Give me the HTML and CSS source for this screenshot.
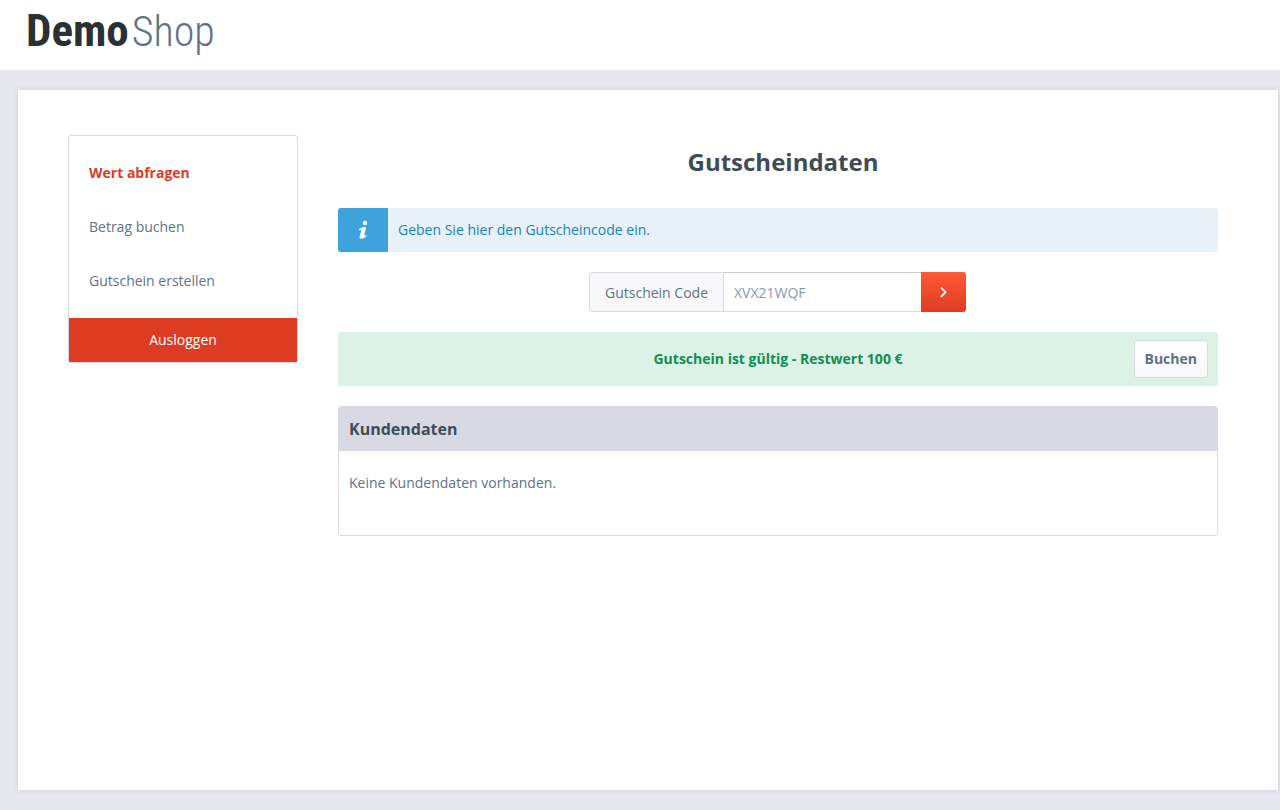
FILE: index.html
```html
<!DOCTYPE html>
<html lang="de">
<head>
<meta charset="utf-8">
<title>DemoShop – Gutscheindaten</title>
<link rel="stylesheet" href="styles.css">
</head>
<body>
<header class="header">
  <a class="logo" href="#"><span class="logo-bold">Demo</span><span class="logo-light">Shop</span></a>
</header>
<div class="page">
  <nav class="sidebar">
    <ul class="menu">
      <li><a class="menu-link active" href="#">Wert abfragen</a></li>
      <li><a class="menu-link" href="#">Betrag buchen</a></li>
      <li><a class="menu-link" href="#">Gutschein erstellen</a></li>
    </ul>
    <a class="logout" href="#">Ausloggen</a>
  </nav>
  <main class="content">
    <h1 class="title">Gutscheindaten</h1>
    <div class="alert">
      <div class="alert-icon">
        <svg width="10" height="20" viewBox="0 0 10 20" fill="#fff" aria-hidden="true">
          <circle cx="7" cy="3" r="2.2"/>
          <path d="M.8 9.200C2.400 8.400 4.600 7 6.600 7c1.200 0 1.500.9 1.200 2L6.200 15.200c-.2.8.2.9.8.6l1.500-.8.4.7C7 17.500 5.200 18.700 3.600 18.700c-1.700 0-2.300-1-1.900-2.400L3.200 10.700c.2-.7-.2-.9-.8-.7L1 10.400z"/>
        </svg>
      </div>
      <p class="alert-text">Geben Sie hier den Gutscheincode ein.</p>
    </div>
    <form class="code-form">
      <label class="code-label" for="code">Gutschein Code</label>
      <input class="code-input" id="code" type="text" value="XVX21WQF">
      <button class="code-submit" type="button" aria-label="Code prüfen">
        <svg width="10" height="12" viewBox="0 0 10 12" fill="none" stroke="#fff" stroke-width="1.800" aria-hidden="true"><path d="M2 1.500L6.500 6.200 2 11"/></svg>
      </button>
    </form>
    <div class="success">
      <strong class="success-text">Gutschein ist gültig - Restwert 100 €</strong>
      <button class="book" type="button">Buchen</button>
    </div>
    <section class="panel">
      <h2 class="panel-title">Kundendaten</h2>
      <p class="panel-body">Keine Kundendaten vorhanden.</p>
    </section>
  </main>
</div>
</body>
</html>
```
FILE: styles.css
```css
* { box-sizing: border-box; }
body {
  margin: 0;
  min-height: 100vh;
  display: flex;
  flex-direction: column;
  background: #e7e8ed;
  color: #5f7285;
  font: 14px/24px "Open Sans", "Noto Sans", sans-serif;
}
h1, h2, p, ul { margin: 0; padding: 0; }
a { text-decoration: none; color: inherit; }
button, input { font: inherit; }
.header {
  height: 70px;
  padding: 6px 26px;
  background: #fff;
}
.logo {
  display: inline-flex;
  align-items: baseline;
  gap: 3px;
  font: 45px/50px "Roboto Condensed", "Open Sans Condensed", Roboto, sans-serif;
}
.logo-bold { font-weight: 700; color: #2b3033; }
.logo-light {
  font-size: 42px;
  font-weight: 350;
  color: #5f7285;
}
.page {
  flex: 1;
  display: flex;
  align-items: flex-start;
  gap: 40px;
  margin: 20px 2px 20px 18px;
  padding: 45px 60px 45px 50px;
  background: #fff;
  box-shadow: 0 0 4px 1px #d4d4e0;
}
.sidebar {
  width: 230px;
  flex-shrink: 0;
  border: 1px solid #d9d9e4;
  border-radius: 3px;
}
.menu { list-style: none; padding: 10px 0; }
.menu-link { display: block; padding: 15px 20px; }
.active { color: #dd3c22; font-weight: 700; }
.logout {
  display: block;
  padding: 10px;
  background: #dd3c22;
  color: #fff;
  text-align: center;
}
.content { flex: 1; min-width: 0; }
.title {
  padding: 11px 0 30px 10px;
  font-size: 24px;
  line-height: 32px;
  font-weight: 700;
  color: #3f4c58;
  text-align: center;
}
.alert {
  display: flex;
  border-radius: 3px;
  overflow: hidden;
  background: #e8f1f8;
  color: #1583b9;
}
.alert-icon {
  width: 50px;
  display: flex;
  align-items: center;
  justify-content: center;
  background: #3ea2dc;
}
.alert-text { padding: 10px; }
.code-form {
  display: flex;
  justify-content: center;
  height: 40px;
  margin: 20px 0;
  padding-right: 1px;
}
.code-label {
  width: 135px;
  padding: 8px 0 8px 15px;
  border: 1px solid #d9d9e4;
  border-radius: 3px 0 0 3px;
  background: #f8f8fa;
}
.code-input {
  width: 197px;
  padding: 2px 10px 0;
  border: 1px solid #d9d9e4;
  border-top-color: #cbcbdb;
  border-width: 1px 0;
  background: #fff;
  color: #8798a9;
}
.code-submit {
  width: 45px;
  padding: 0;
  display: flex;
  align-items: center;
  justify-content: center;
  border: 0;
  border-radius: 0 3px 3px 0;
  background: linear-gradient(#ff5a36, #dd3c22);
}
.success {
  display: grid;
  grid-template-columns: 1fr auto 1fr;
  align-items: center;
  padding: 8px 10px;
  margin-bottom: 20px;
  border-radius: 3px;
  background: #dcf2e6;
  color: #118e50;
}
.success-text { grid-column: 2; }
.book {
  justify-self: end;
  height: 38px;
  padding: 0 10px;
  border: 1px solid #d9d9e4;
  border-radius: 3px;
  background: linear-gradient(#fff, #f8f8fa);
  color: #5f7285;
  font-weight: 700;
}
.panel {
  border: 1px solid #d9d9e4;
  border-radius: 3px;
}
.panel-title {
  padding: 10px;
  background: #d9d9e3;
  color: #3f4c58;
  font-size: 16px;
  font-weight: 700;
}
.panel-body { padding: 20px 10px 40px; }
```
